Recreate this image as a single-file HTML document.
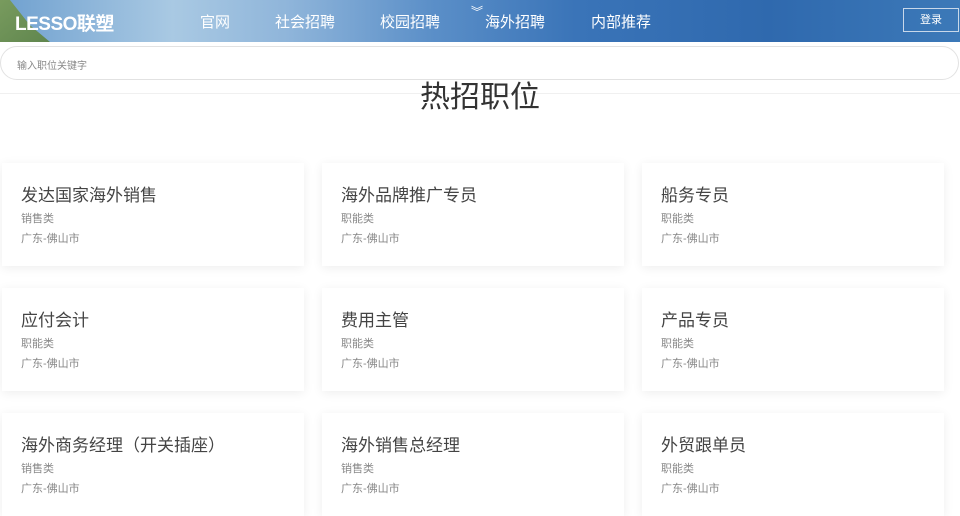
<!DOCTYPE html>
<html><head><meta charset="utf-8"><style>
*{margin:0;padding:0;box-sizing:border-box}
body{width:960px;height:512px;overflow:hidden;background:#fff;font-family:"Liberation Sans","Noto Sans CJK SC",sans-serif;position:relative}
.hdr{position:absolute;left:0;top:0;width:960px;height:42px;background:linear-gradient(90deg,#6fa0cf 0%,#a9c9e3 18%,#8fb5da 30%,#5b8fc8 45%,#3a74b8 60%,#2f69ae 80%,#3c79b8 100%)}
.grass{position:absolute;left:0;top:0;width:50px;height:42px;background:linear-gradient(135deg,#7a9a4a,#5a7f36);clip-path:polygon(0 0,20% 0,60% 60%,100% 100%,0 100%);opacity:.85}
.logo{position:absolute;left:15px;top:9px;color:#fff;font-size:19px;font-weight:bold;letter-spacing:-0.5px}
.nav{position:absolute;top:11px;color:#fff;font-size:15px}
.login{position:absolute;left:903px;top:8px;width:56px;height:24px;border:1px solid #c8d8ea;color:#fff;font-size:11px;text-align:center;line-height:22px}
.search{position:absolute;left:0;top:46px;width:959px;height:34px;border:1px solid #e2e2e2;border-radius:17px;background:#fff;font-size:10px;color:#888;padding:10px 0 0 16px}
.line{position:absolute;left:0;top:93px;width:960px;height:1px;background:#f0f0f0}
h1{position:absolute;left:0;width:960px;top:72px;text-align:center;font-size:30px;font-weight:normal;color:#333}
.card{position:absolute;width:302px;height:103px;background:#fff;box-shadow:0 2px 10px rgba(0,0,0,0.07)}
.card .t{position:absolute;left:19px;top:18px;font-size:17px;color:#444}
.card .c{position:absolute;left:19px;top:47px;font-size:11px;color:#888}
.card .l{position:absolute;left:19px;top:67px;font-size:11px;color:#888}
</style></head><body>
<div class="hdr"><div class="grass"></div>
<div class="logo">LESSO联塑</div>
<div class="nav" style="left:200px">官网</div>
<div class="nav" style="left:275px">社会招聘</div>
<div class="nav" style="left:380px">校园招聘</div>
<div class="nav" style="left:471px;top:3px;font-size:12px">︾</div>
<div class="nav" style="left:485px">海外招聘</div>
<div class="nav" style="left:591px">内部推荐</div>
<div class="login">登录</div>
</div>
<div class="search">输入职位关键字</div>
<div class="line"></div>
<h1>热招职位</h1>

<div class="card" style="left:2px;top:163px"><div class="t">发达国家海外销售</div><div class="c">销售类</div><div class="l">广东-佛山市</div></div>
<div class="card" style="left:322px;top:163px"><div class="t">海外品牌推广专员</div><div class="c">职能类</div><div class="l">广东-佛山市</div></div>
<div class="card" style="left:642px;top:163px"><div class="t">船务专员</div><div class="c">职能类</div><div class="l">广东-佛山市</div></div>

<div class="card" style="left:2px;top:288px"><div class="t">应付会计</div><div class="c">职能类</div><div class="l">广东-佛山市</div></div>
<div class="card" style="left:322px;top:288px"><div class="t">费用主管</div><div class="c">职能类</div><div class="l">广东-佛山市</div></div>
<div class="card" style="left:642px;top:288px"><div class="t">产品专员</div><div class="c">职能类</div><div class="l">广东-佛山市</div></div>

<div class="card" style="left:2px;top:413px"><div class="t">海外商务经理（开关插座）</div><div class="c">销售类</div><div class="l">广东-佛山市</div></div>
<div class="card" style="left:322px;top:413px"><div class="t">海外销售总经理</div><div class="c">销售类</div><div class="l">广东-佛山市</div></div>
<div class="card" style="left:642px;top:413px"><div class="t">外贸跟单员</div><div class="c">职能类</div><div class="l">广东-佛山市</div></div>
</body></html>
